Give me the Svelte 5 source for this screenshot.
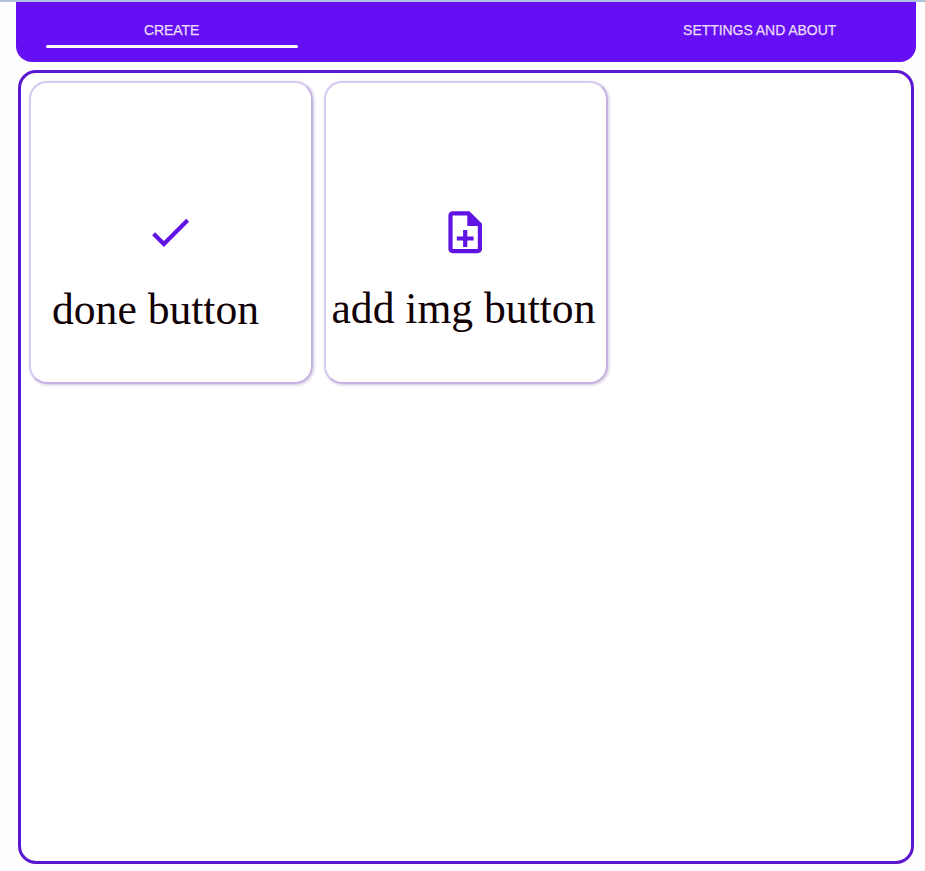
<script>
  const tabs = [
    { label: 'CREATE', active: true },
    { label: '', active: false },
    { label: 'SETTINGS AND ABOUT', active: false }
  ];
</script>

<div class="page">
  <nav>
    {#each tabs as tab}
      <div class="tab" class:active={tab.active}>{tab.label}</div>
    {/each}
  </nav>
  <main>
    <div class="card">
      <svg viewBox="0 0 24 24"><path d="M9 16.2 4.8 12l-1.4 1.4L9 19 21 7l-1.4-1.4z" /></svg>
      <p class="done">done button</p>
    </div>
    <div class="card">
      <svg viewBox="0 0 24 24"><path fill-rule="evenodd" d="M14 2H6c-1.1 0-2 .9-2 2v16c0 1.1.9 2 2 2h12c1.1 0 2-.9 2-2V8zM13 4v5h5v11H6V4zM11 11h2v3h3v2h-3v3h-2v-3H8v-2h3z" /></svg>
      <p class="add">add img button</p>
    </div>
  </main>
</div>

<style>
  :global(body) { background: #fefefe; }
  .page {
    box-sizing: border-box;
    height: 871px;
    border-top: 2px solid #b1c2df;
    overflow: hidden;
    font-family: "Liberation Sans", Arial, sans-serif;
  }
  nav {
    box-sizing: border-box;
    display: grid;
    grid-template-columns: repeat(3, 294px);
    justify-content: center;
    margin: 0 9.3px 0 15.7px;
    height: 60.3px;
    background: #6510f4;
    border-radius: 0 0 16px 16px;
  }
  .tab {
    box-sizing: border-box;
    height: 46.5px;
    margin: 0 21px;
    padding-top: 20px;
    text-align: center;
    font-size: 14px;
    line-height: 17px;
    letter-spacing: -0.05px;
    color: #e9dcfb;
    -webkit-text-stroke: 0.25px #e9dcfb;
    white-space: nowrap;
  }
  .active {
    position: relative;
  }
  .active::after {
    content: '';
    position: absolute;
    left: 0;
    right: 0;
    top: 43px;
    height: 3.4px;
    border-radius: 2px;
    background: #fff;
  }
  main {
    box-sizing: border-box;
    display: flex;
    align-items: flex-start;
    gap: 11px;
    margin: 7.5px 11.5px 0 17.5px;
    height: 794px;
    padding: 8.5px;
    border: 3px solid #5b16cf;
    border-radius: 18px;
    background: #fff;
  }
  .card {
    box-sizing: border-box;
    flex: none;
    width: 284px;
    height: 303px;
    padding-top: 124px;
    border: 2px solid #d8c9f0;
    border-right-color: #c4b2e2;
    border-bottom-color: #c4b2e2;
    border-radius: 18px;
    box-shadow: 1px 1px 3px rgba(60, 30, 110, 0.25);
  }
  svg {
    display: block;
    width: 50.4px;
    height: 50.4px;
    margin: 0 0 0 113.8px;
    fill: #6013e3;
  }
  p {
    margin: 0;
    font: 43.6px/50px "Liberation Serif", "Times New Roman", serif;
    color: #100004;
    white-space: nowrap;
  }
  .done { padding: 26px 0 0 21px; }
  .add { padding: 25px 0 0 5.5px; }
</style>
